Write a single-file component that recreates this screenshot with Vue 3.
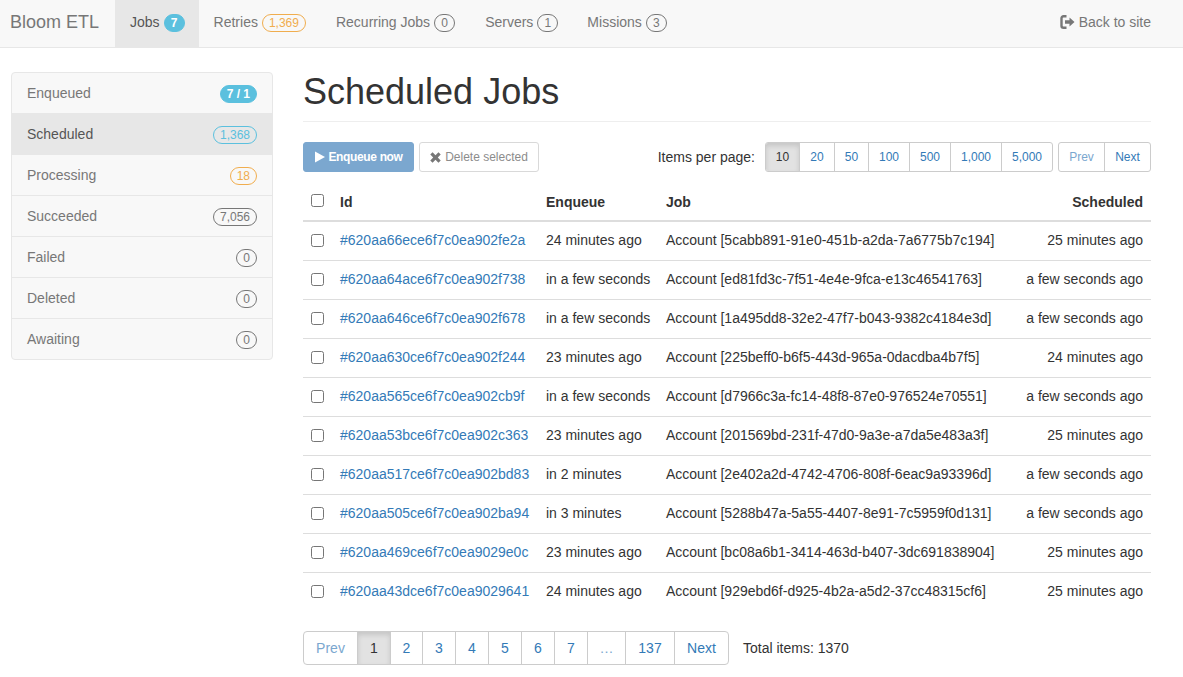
<template>
  <div class="page">
    <nav class="navbar">
      <a class="brand">Bloom ETL</a>
      <ul class="nav-items">
        <li v-for="item in navItems" :key="item.label" :class="{ active: item.active }">
          {{ item.label }}
          <span class="badge" :class="item.kind">{{ item.count }}</span>
        </li>
      </ul>
      <a class="back">
        <svg class="back-icon" viewBox="0 0 15 14" width="15" height="14">
          <path d="M6.500 1.200H3.500A2 2 0 0 0 1.500 3.200v7.600a2 2 0 0 0 2 2h3" fill="none" stroke="#777" stroke-width="2.400" />
          <path d="M5 5.300h4.500V2.500L14.500 7l-5 4.500V8.700H5z" fill="#777" />
        </svg>
        Back to site
      </a>
    </nav>

    <div class="content">
      <aside class="sidebar">
        <div
          v-for="item in sideItems"
          :key="item.label"
          class="side-item"
          :class="{ active: item.active }"
        >
          <span>{{ item.label }}</span>
          <span class="badge" :class="item.kind">{{ item.count }}</span>
        </div>
      </aside>

      <main class="main">
        <h1>Scheduled Jobs</h1>

        <div class="toolbar">
          <button class="btn primary">
            <svg viewBox="0 0 10 12" width="10" height="12"><path d="M0 .5l10 5.500-10 5.500z" fill="#fff" /></svg>
            <span class="tight">Enqueue now</span>
          </button>
          <button class="btn outline">
            <svg viewBox="0 0 12 12" width="11" height="11">
              <path d="M2.800 .3L6 3.500 9.200 .3 11.700 2.800 8.500 6l3.200 3.200-2.500 2.500L6 8.500l-3.200 3.200L.3 9.200 3.500 6 .3 2.800z" fill="#777" />
            </svg>
            Delete selected
          </button>
          <div class="per-page">
            <span class="per-label">Items per page:</span>
            <div class="btn-group">
              <span
                v-for="(size, i) in pageSizes"
                :key="size.label"
                class="seg"
                :class="{ current: i === 0 }"
                :style="{ width: size.width + 'px' }"
              >{{ size.label }}</span>
            </div>
            <div class="btn-group">
              <span class="seg disabled" :style="{ width: '45px' }">Prev</span>
              <span class="seg" :style="{ width: '46px' }">Next</span>
            </div>
          </div>
        </div>

        <table class="jobs">
          <colgroup>
            <col class="c-check" />
            <col class="c-id" />
            <col class="c-enq" />
            <col />
            <col class="c-sched" />
          </colgroup>
          <thead>
            <tr>
              <th><span class="check"></span></th>
              <th>Id</th>
              <th>Enqueue</th>
              <th>Job</th>
              <th class="right">Scheduled</th>
            </tr>
          </thead>
          <tbody>
            <tr v-for="job in jobs" :key="job.id">
              <td><span class="check"></span></td>
              <td><a class="link">#{{ job.id }}</a></td>
              <td>{{ job.enqueue }}</td>
              <td>Account [{{ job.account }}]</td>
              <td class="right">{{ job.scheduled }}</td>
            </tr>
          </tbody>
        </table>

        <div class="footer">
          <div class="btn-group large">
            <span
              v-for="p in pages"
              :key="p.label"
              class="seg"
              :class="{ current: p.current, disabled: p.disabled }"
              :style="{ width: p.width + 'px' }"
            >{{ p.label }}</span>
          </div>
          <span class="total">Total items: 1370</span>
        </div>
      </main>
    </div>
  </div>
</template>

<script setup>
const navItems = [
  { label: 'Jobs', count: '7', kind: 'info', active: true },
  { label: 'Retries', count: '1,369', kind: 'warn-o' },
  { label: 'Recurring Jobs', count: '0', kind: 'plain' },
  { label: 'Servers', count: '1', kind: 'plain' },
  { label: 'Missions', count: '3', kind: 'plain' }
]

const sideItems = [
  { label: 'Enqueued', count: '7 / 1', kind: 'info' },
  { label: 'Scheduled', count: '1,368', kind: 'info-o', active: true },
  { label: 'Processing', count: '18', kind: 'warn-o' },
  { label: 'Succeeded', count: '7,056', kind: 'plain' },
  { label: 'Failed', count: '0', kind: 'plain' },
  { label: 'Deleted', count: '0', kind: 'plain' },
  { label: 'Awaiting', count: '0', kind: 'plain' }
]

const pageSizes = [
  { label: '10', width: 33 },
  { label: '20', width: 35 },
  { label: '50', width: 34 },
  { label: '100', width: 41 },
  { label: '500', width: 41 },
  { label: '1,000', width: 51 },
  { label: '5,000', width: 51 }
]

const jobs = [
  { id: '620aa66ece6f7c0ea902fe2a', enqueue: '24 minutes ago', account: '5cabb891-91e0-451b-a2da-7a6775b7c194', scheduled: '25 minutes ago' },
  { id: '620aa64ace6f7c0ea902f738', enqueue: 'in a few seconds', account: 'ed81fd3c-7f51-4e4e-9fca-e13c46541763', scheduled: 'a few seconds ago' },
  { id: '620aa646ce6f7c0ea902f678', enqueue: 'in a few seconds', account: '1a495dd8-32e2-47f7-b043-9382c4184e3d', scheduled: 'a few seconds ago' },
  { id: '620aa630ce6f7c0ea902f244', enqueue: '23 minutes ago', account: '225beff0-b6f5-443d-965a-0dacdba4b7f5', scheduled: '24 minutes ago' },
  { id: '620aa565ce6f7c0ea902cb9f', enqueue: 'in a few seconds', account: 'd7966c3a-fc14-48f8-87e0-976524e70551', scheduled: 'a few seconds ago' },
  { id: '620aa53bce6f7c0ea902c363', enqueue: '23 minutes ago', account: '201569bd-231f-47d0-9a3e-a7da5e483a3f', scheduled: '25 minutes ago' },
  { id: '620aa517ce6f7c0ea902bd83', enqueue: 'in 2 minutes', account: '2e402a2d-4742-4706-808f-6eac9a93396d', scheduled: 'a few seconds ago' },
  { id: '620aa505ce6f7c0ea902ba94', enqueue: 'in 3 minutes', account: '5288b47a-5a55-4407-8e91-7c5959f0d131', scheduled: 'a few seconds ago' },
  { id: '620aa469ce6f7c0ea9029e0c', enqueue: '23 minutes ago', account: 'bc08a6b1-3414-463d-b407-3dc691838904', scheduled: '25 minutes ago' },
  { id: '620aa43dce6f7c0ea9029641', enqueue: '24 minutes ago', account: '929ebd6f-d925-4b2a-a5d2-37cc48315cf6', scheduled: '25 minutes ago' }
]

const pages = [
  { label: 'Prev', disabled: true, width: 53 },
  { label: '1', current: true, width: 33 },
  { label: '2', width: 32 },
  { label: '3', width: 33 },
  { label: '4', width: 33 },
  { label: '5', width: 33 },
  { label: '6', width: 33 },
  { label: '7', width: 33 },
  { label: '…', disabled: true, width: 38 },
  { label: '137', width: 49 },
  { label: 'Next', width: 54 }
]
</script>

<style>
html,
body {
  margin: 0;
  background: #fff;
}
</style>

<style scoped>
.page {
  font-family: "Liberation Sans", Arial, sans-serif;
  font-size: 14px;
  line-height: 20px;
  color: #333;
  height: 677px;
  overflow: hidden;
}

.navbar {
  display: flex;
  align-items: stretch;
  height: 47px;
  background: #f8f8f8;
  border-bottom: 1px solid #e7e7e7;
  color: #777;
}

.brand {
  box-sizing: border-box;
  width: 115px;
  padding-left: 10px;
  font-size: 18px;
  line-height: 45px;
  white-space: nowrap;
}

.nav-items {
  display: flex;
  list-style: none;
  margin: 0;
  padding: 0;
}

.nav-items li {
  display: flex;
  align-items: center;
  gap: 4px;
  padding: 0 15px 4px;
}

.nav-items li .badge {
  margin-top: 2px;
}

.nav-items li:first-child {
  padding-right: 14px;
}

.nav-items li:last-child {
  padding-left: 14px;
}

.nav-items li.active {
  background: #e7e7e7;
  color: #555;
}

.back {
  display: flex;
  align-items: center;
  gap: 4px;
  margin-left: auto;
  padding: 0 32px 4px 0;
}

.badge {
  display: inline-block;
  box-sizing: border-box;
  min-width: 21px;
  height: 18px;
  padding: 0 6px;
  border: 1px solid #777;
  border-radius: 9px;
  font-size: 12px;
  line-height: 16px;
  text-align: center;
  color: #777;
  background: transparent;
}

.badge.info {
  border-color: #5bc0de;
  background: #5bc0de;
  color: #fff;
  font-weight: bold;
}

.badge.info-o {
  border-color: #5bc0de;
  color: #5bc0de;
}

.badge.warn-o {
  border-color: #f0ad4e;
  color: #f0ad4e;
}

.content {
  display: flex;
  align-items: flex-start;
  padding: 24px 32px 0 11px;
}

.sidebar {
  box-sizing: border-box;
  width: 262px;
  flex-shrink: 0;
  background: #f8f8f8;
  border: 1px solid #e7e7e7;
  border-radius: 4px;
  overflow: hidden;
}

.side-item {
  display: flex;
  justify-content: space-between;
  align-items: center;
  box-sizing: border-box;
  height: 41px;
  padding: 0 15px;
  color: #777;
  border-top: 1px solid #e7e7e7;
}

.side-item .badge {
  margin-top: 2px;
}

.side-item:first-child {
  border-top: 0;
  height: 40px;
}

.side-item.active {
  background: #e7e7e7;
  color: #555;
  border-top-color: #e7e7e7;
}

.main {
  flex: 1;
  min-width: 0;
  margin-left: 30px;
}

h1 {
  margin: 0 0 20px;
  height: 49px;
  border-bottom: 1px solid #eee;
  font-size: 36px;
  font-weight: 500;
  line-height: 40px;
  color: #333;
}

.toolbar {
  display: flex;
  align-items: center;
  gap: 5px;
  height: 30px;
}

.btn {
  display: flex;
  align-items: center;
  justify-content: center;
  gap: 4px;
  box-sizing: border-box;
  height: 30px;
  padding: 0 10px;
  border: 1px solid #ccc;
  border-radius: 3px;
  font: inherit;
  font-size: 12px;
  line-height: 18px;
  background: #fff;
}

.btn.primary {
  width: 111px;
  padding: 0 0 0 1px;
  gap: 3px;
  background: #7ba7cf;
  border-color: #7ba7cf;
  color: #fff;
  font-weight: bold;
}

.tight {
  letter-spacing: -0.35px;
}

.btn.outline {
  width: 120px;
  padding: 0;
  border-color: #d9d9d9;
  color: #8c8c8c;
}

.per-page {
  display: flex;
  align-items: center;
  gap: 5px;
  margin-left: auto;
}

.per-label {
  margin-right: 5px;
}

.btn-group {
  display: flex;
  height: 30px;
  border: 1px solid #ccc;
  border-radius: 3px;
  box-sizing: border-box;
  overflow: hidden;
  font-size: 12px;
}

.seg {
  display: flex;
  align-items: center;
  justify-content: center;
  box-sizing: border-box;
  color: #337ab7;
  border-left: 1px solid #ccc;
}

.seg:first-child {
  border-left: 0;
}

.seg.current {
  background: #e2e2e2;
  color: #333;
  box-shadow: inset 0 3px 5px rgba(0, 0, 0, 0.125);
}

.seg.disabled {
  color: #7ba7cf;
}

.btn-group.large {
  height: 34px;
  font-size: 14px;
  border-radius: 4px;
}

.jobs {
  width: 100%;
  margin-top: 10px;
  border-collapse: collapse;
  table-layout: fixed;
}

.c-check {
  width: 29px;
}

.c-id {
  width: 206px;
}

.c-enq {
  width: 120px;
}

.c-sched {
  width: 157px;
}

.jobs th,
.jobs td {
  padding: 0 8px;
  text-align: left;
  white-space: nowrap;
}

.jobs th {
  height: 36px;
  padding-top: 2px;
  border-bottom: 2px solid #ddd;
  font-weight: bold;
}

.jobs th .check {
  margin-top: -4px;
}

.jobs td {
  height: 36px;
  padding-bottom: 2px;
  border-top: 1px solid #ddd;
}

.jobs tbody tr:first-child td {
  border-top: 0;
}

.jobs th.right,
.jobs td.right {
  text-align: right;
}

.link {
  color: #337ab7;
}

.check {
  display: block;
  box-sizing: border-box;
  width: 13px;
  height: 13px;
  border: 1px solid #767676;
  border-radius: 2.500px;
  background: #fff;
}

.footer {
  display: flex;
  align-items: center;
  gap: 14px;
  margin-top: 20px;
}
</style>
